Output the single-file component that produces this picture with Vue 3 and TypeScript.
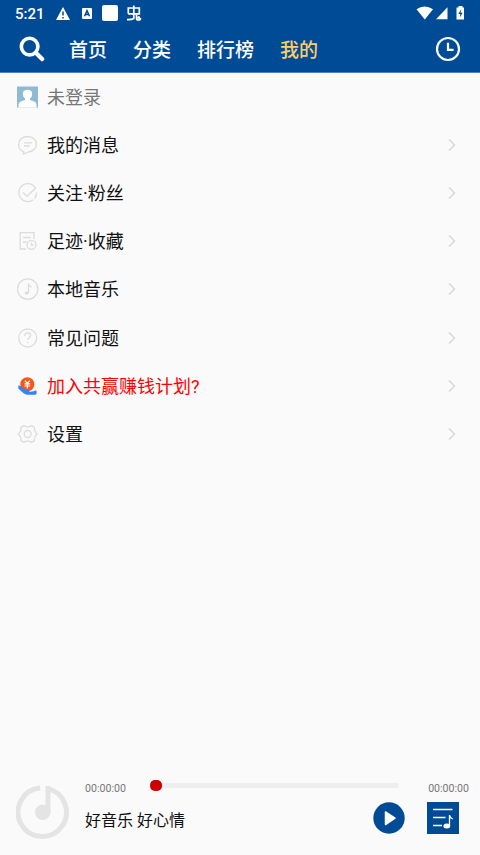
<script setup lang="ts">
import { ref } from 'vue'

interface MenuItem {
  label: string
  icon: string
  kind?: 'muted' | 'promo'
}

const tabs: string[] = ['首页', '分类', '排行榜', '我的']
const active = ref('我的')

const menu: MenuItem[] = [
  { label: '未登录', icon: 'avatar', kind: 'muted' },
  { label: '我的消息', icon: 'message' },
  { label: '关注·粉丝', icon: 'follow' },
  { label: '足迹·收藏', icon: 'history' },
  { label: '本地音乐', icon: 'music' },
  { label: '常见问题', icon: 'help' },
  { label: '加入共赢赚钱计划?', icon: 'earn', kind: 'promo' },
  { label: '设置', icon: 'settings' },
]
</script>

<template>
  <div class="screen">
    <header>
      <div class="status">
        <span class="time">5:21</span>
        <svg class="warn" width="14" height="13" viewBox="0 0 14 13"><path d="M7 0 14 13H0Z" fill="#fff" /><path d="M7 4.5v4M7 10v1.4" stroke="#004b96" stroke-width="1.5" /></svg>
        <svg class="input" width="10" height="11" viewBox="0 0 10 11"><rect width="10" height="11" rx="1" fill="#fff" /><path d="M2.5 8.3 5 2.6l2.5 5.7M3.5 6.5h3" fill="none" stroke="#004b96" stroke-width="1.5" /></svg>
        <span class="square"></span>
        <svg class="bug" width="16" height="17" viewBox="0 0 16 17" fill="none" stroke="#fff" stroke-width="1.7"><path d="M2.300 8.800V3h11v5.800H2.300M7.800 .5v13.300M1 14.600q4.500.2 7.500-1.400M10.500 8.500v4.500q0 2 2 2t2-2" /><circle cx="12.700" cy="12.500" r="1.500" fill="#fff" stroke="none" /></svg>
        <svg class="signals" width="50" height="16" viewBox="0 0 50 16" fill="#fff"><path d="M.5 4.300Q8.500-1.500 17 4.300L8.800 14.500Z" /><path d="M31.500 2.200v12H20Z" /><path d="M42.500 1h4v1.500h1.500v12h-7.500v-12h2Z" /><path d="m45.300 4-3 5h2.100l-.700 3.700 3-5h-2.100Z" fill="#004b96" /></svg>
      </div>
      <nav>
        <svg class="search" width="26" height="26" viewBox="0 0 26 26" fill="none" stroke="#fff" stroke-width="3.600"><circle cx="10.600" cy="10.600" r="8.300" /><path d="m16.800 16.800 6.300 6.300" stroke-width="4.300" stroke-linecap="round" /></svg>
        <a v-for="tab in tabs" :key="tab" :class="{ active: tab === active }" @click="active = tab">{{ tab }}</a>
        <svg class="clock" width="26" height="26" viewBox="0 0 26 26" fill="none" stroke="#fff" stroke-width="2.200"><circle cx="13" cy="13" r="11" /><path d="M13 6.800v7h5.600" /></svg>
      </nav>
    </header>

    <main>
      <div v-for="item in menu" :key="item.label" class="row" :class="item.kind">
        <svg class="icon" width="22" height="22" viewBox="0 0 22 22" fill="none" stroke="#dcdcdc" stroke-width="1.300">
          <template v-if="item.icon === 'avatar'"><rect width="21" height="21" y=".5" fill="#90b9d2" stroke="none" /><path d="M1.500 21.500V19q0-3 3.500-4l3-1v-1.500Q6 11 6 9.200 4.800 4 10.500 3.700 16.200 4 15 9.200q0 1.800-2 3.300V14l3 1q3.500 1 3.500 4v2.500Z" fill="#fff" stroke="none" /></template>
          <template v-else-if="item.icon === 'message'"><path d="M7 18C-1.500 14.500.5 2.800 10.500 2.500 22 2.700 22.500 16.500 11.500 18L6.200 20Z" stroke-linejoin="round" /><path d="M7 8.800h8M7 12h5.500" /></template>
          <template v-else-if="item.icon === 'follow'"><path d="M18.800 6.500a9 9 0 1 0-2.500 11.200M17.500 16.500a9 9 0 0 0 2-6" /><path d="m6 10.500 4 3.800 8.800-8.300" /></template>
          <template v-else-if="item.icon === 'history'"><path d="M17 9V2.700H3.200V19H9M6 7.500h8M6 12h3.500" /><circle cx="14.500" cy="14.800" r="4.500" /><path d="M14.500 12.500V15h2" /></template>
          <template v-else-if="item.icon === 'music'"><circle cx="10.700" cy="11" r="10.200" /><path d="M11.500 15V5.500q.5 2.800 3 3.500" /><ellipse cx="9.700" cy="15" rx="2" ry="1.500" fill="#dcdcdc" stroke="none" /></template>
          <template v-else-if="item.icon === 'help'"><circle cx="10.700" cy="11" r="9" /><path d="M7.700 9q0-3 3-3t3 2.600c0 2-3 2.200-3 4.500M10.700 14.800v1.400" /></template>
          <template v-else-if="item.icon === 'earn'"><circle cx="10.300" cy="9.200" r="7" fill="#f65717" stroke="none" /><path d="m7.900 5.700 2.400 2.800 2.400-2.800M7.500 8.900h5.600M7.500 11h5.600M10.300 8.500v5" stroke="#fff" stroke-width="1.200" /><path d="M1.300 10.500Q3 10 4.800 12q1.700 2 3.200 2.300l4 .700q1.200.700.300 1.700 3.700.300 7-1.400l.400 3.300q-.5 1.200-2 1.200H10Q7.500 19.700 1.300 13.500Z" fill="#3385f5" stroke="none" /></template>
          <template v-else><path d="M7 2.600q3.700 2.600 7.400 0l3 1.800q-.2 4.500 2.900 6.600-3.100 2.100-2.900 6.600l-3 1.800q-3.700-2.600-7.400 0l-3-1.800Q4.200 13.100 1.100 11 4.200 8.900 4 4.400Z" stroke-linejoin="round" /><circle cx="10.700" cy="11" r="3.500" /></template>
        </svg>
        <span class="label">{{ item.label }}</span>
        <svg v-if="item.icon !== 'avatar'" class="arrow" width="8" height="14" viewBox="0 0 8 14" fill="none" stroke="#d8d8d8" stroke-width="1.500"><path d="m1 1.500 5.500 5.500L1 12.500" /></svg>
      </div>
    </main>

    <footer>
      <svg class="disc" width="54" height="54" viewBox="0 0 54 54" fill="none" stroke="#e4e4e4" stroke-width="5"><path d="M24.200 3.100a24.200 24.200 0 1 0 7.300.5" /><circle cx="26.700" cy="27.200" r="7.800" fill="#e4e4e4" stroke="none" /><path d="M32 1v26.500" /></svg>
      <div class="player">
        <div class="progress">
          <span class="stamp">00:00:00</span>
          <div class="track"><span class="knob"></span></div>
          <span class="stamp">00:00:00</span>
        </div>
        <div class="controls">
          <span class="song">好音乐 好心情</span>
          <svg class="play" width="32" height="32" viewBox="0 0 32 32"><circle cx="16" cy="16" r="15.700" fill="#004b96" /><path d="M12.500 10v12.500L22 16.200Z" fill="#fff" stroke="#fff" stroke-width="1.500" stroke-linejoin="round" /></svg>
          <svg width="32" height="32" viewBox="0 0 32 32" fill="none" stroke="#fff" stroke-width="1.300"><rect width="32" height="32" fill="#004b96" stroke="none" /><path d="M6 7.500h19.500M6 15.500h12.500M6 23.500h9M22.500 24V13q.5 3 3.300 4" /><ellipse cx="19.800" cy="24" rx="3.400" ry="2.500" fill="#fff" stroke="none" /></svg>
        </div>
      </div>
    </footer>
  </div>
</template>

<style>
body { margin: 0; }
</style>

<style scoped>
.screen { display: flex; flex-direction: column; box-sizing: border-box; width: 480px; height: 855px; overflow: hidden; background: #fafafa; font-family: Roboto, "Noto Sans CJK SC", sans-serif; color: #111; }
svg { display: block; flex: none; }
header { box-sizing: border-box; height: 73px; background: #004b96; border-bottom: 1px solid #4d7fbd; color: #fff; }
.status { display: flex; align-items: center; height: 26px; padding: 0 14px 0 15px; }
.time { width: 41px; padding-top: 1px; font-size: 15px; font-weight: 500; }
.input { margin-left: 12px; }
.square { width: 16px; height: 16px; margin-left: 10px; border-radius: 2px; background: #fff; }
.bug { margin-left: 8px; }
.signals { margin-left: auto; }
nav { display: flex; align-items: center; height: 46px; padding: 0 19px; }
.search { margin-right: 24px; }
nav a { margin-right: 26px; padding-top: 3px; font-size: 19px; font-weight: 500; line-height: 28px; white-space: nowrap; }
nav a.active { color: #fdcd69; }
.clock { margin: 0 0 0 auto; }
main { flex: 1; }
.row { display: flex; align-items: center; height: 48.100px; padding: 0 24px 0 17px; }
.label { margin-left: 8px; padding-top: 2px; font-size: 18px; line-height: 26px; }
.muted .label { color: #777; }
.promo .label { color: #f00; }
.arrow { margin-left: auto; }
footer { display: flex; height: 80px; padding-left: 16px; }
.disc { margin-top: 10px; }
.player { flex: 1; padding: 5px 11px 0 15px; }
.progress { display: flex; align-items: center; height: 18px; }
.stamp { font-size: 10.600px; line-height: 18px; color: #777; }
.track { position: relative; flex: 1; height: 5px; margin: -7px 29px 0 29px; border-radius: 2px; background: #eee; }
.knob { position: absolute; left: -5px; top: -3px; width: 12px; height: 11px; border-radius: 5px; background: #c00; }
.controls { display: flex; align-items: center; height: 39px; padding-right: 10px; }
.song { flex: 1; padding-top: 7px; font-size: 16px; line-height: 24px; }
.play { margin-right: 22px; }
</style>
